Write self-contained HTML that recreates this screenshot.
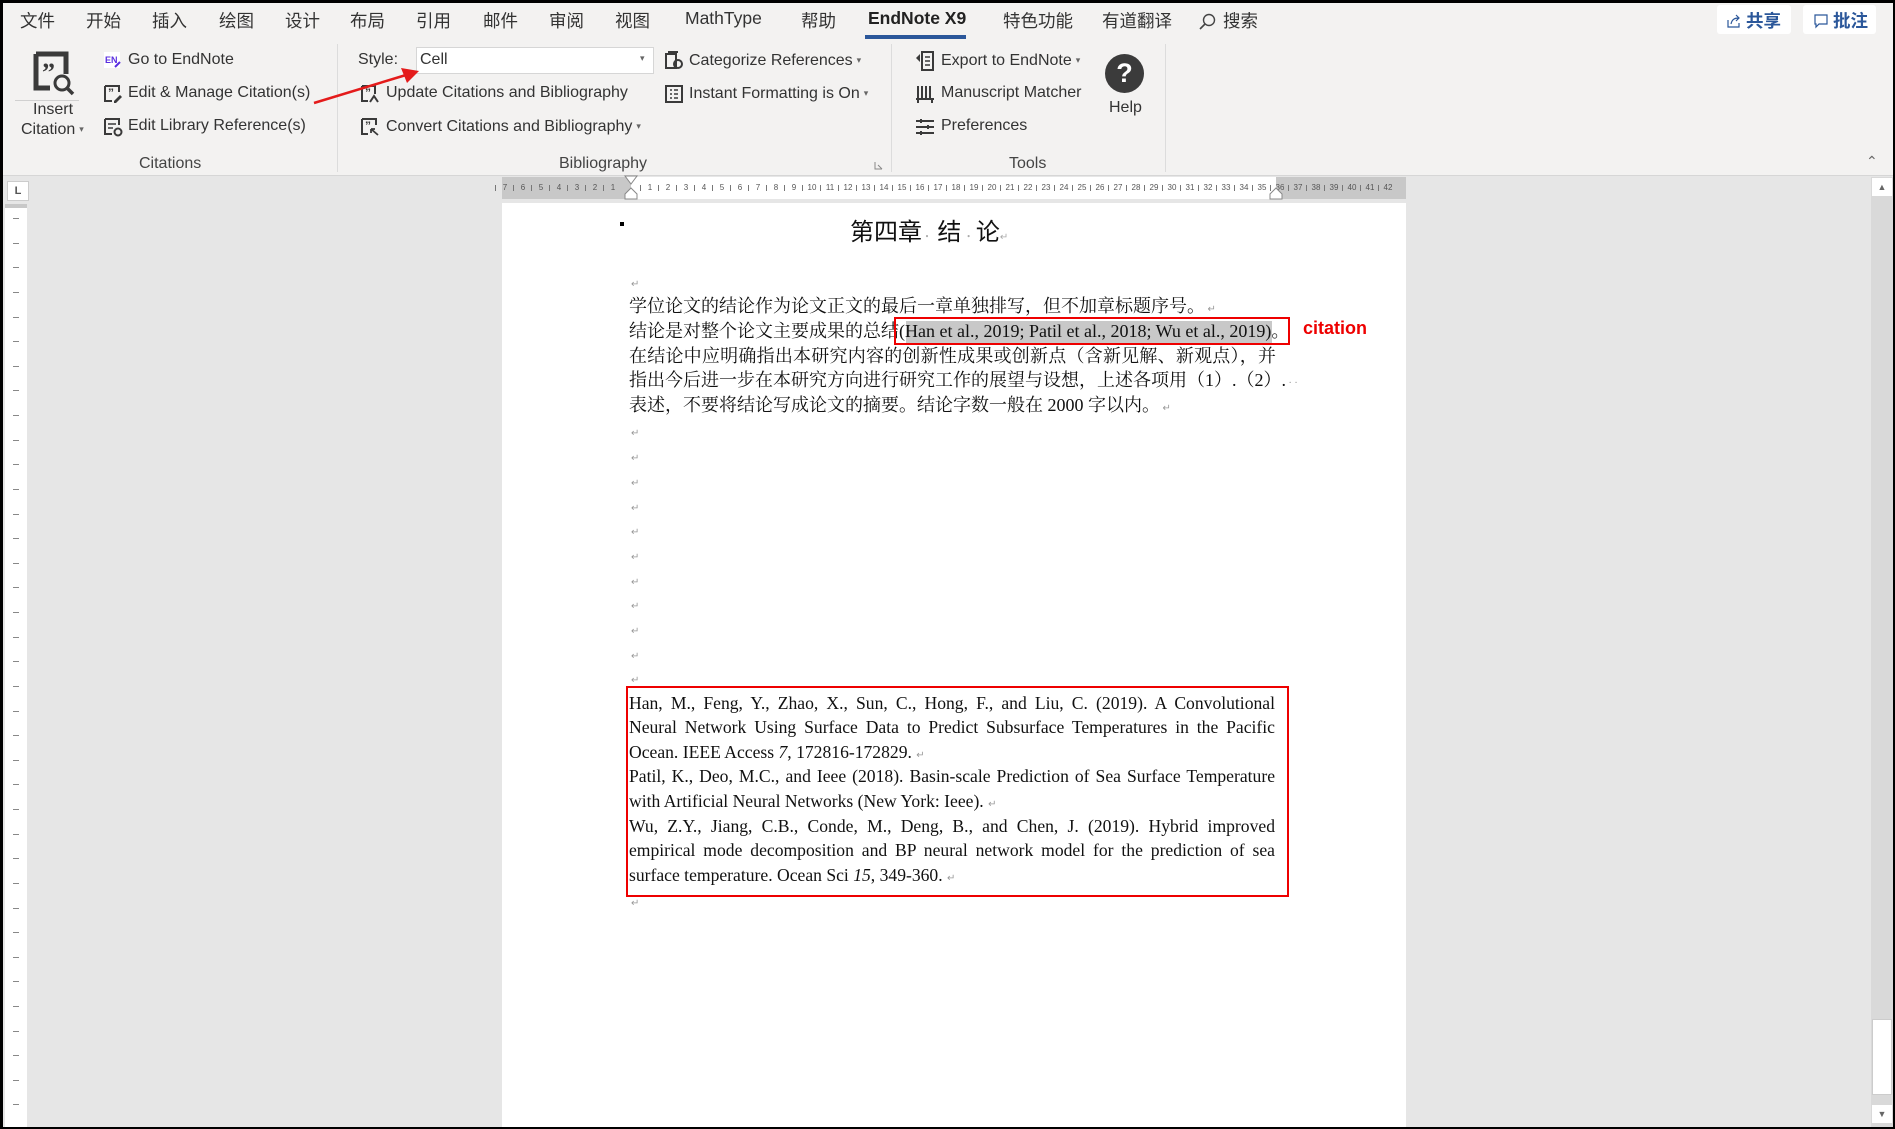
<!DOCTYPE html>
<html><head><meta charset="utf-8">
<style>
*{margin:0;padding:0;box-sizing:border-box}
body{width:1895px;height:1129px;overflow:hidden;background:#000;position:relative;font-family:"Liberation Sans","Noto Sans CJK SC",sans-serif}
#win{position:absolute;left:3px;top:3px;width:1890px;height:1124px;background:#e6e6e6;overflow:hidden}
.abs{position:absolute}
#menu{position:absolute;left:0;top:0;width:100%;height:37px;background:#f3f2f1}
.tab{position:absolute;top:5px;font-size:17.5px;color:#333;white-space:nowrap}
#ribbon{position:absolute;left:0;top:37px;width:100%;height:136px;background:#f3f2f1;border-bottom:1px solid #d6d6d6}
.rt{position:absolute;font-size:16px;color:#333;white-space:nowrap;line-height:20px}
.sep{position:absolute;top:4px;width:1px;height:128px;background:#dcdcdc}
.grp{position:absolute;top:115px;font-size:16px;color:#444}
.ic{position:absolute}
.dd{font-size:9px;color:#666;margin-left:4px;vertical-align:2px}
#ruler{position:absolute;left:499px;top:174px;width:904px;height:22px;background:#c8c8c8}
#rwhite{position:absolute;left:129px;top:0;width:645px;height:22px;background:#fff}
.rn{position:absolute;top:5px;width:18px;text-align:center;font-size:8px;color:#555;line-height:12px}
.rn:before{content:"";position:absolute;left:-1px;top:3px;width:1px;height:6px;background:#777}
#page{position:absolute;left:499px;top:200px;width:904px;height:930px;background:#fff}
.ln{position:absolute;font-family:"Liberation Serif","Noto Serif CJK SC",serif;font-size:18px;color:#111;white-space:nowrap;line-height:24px}
.rf{position:absolute;left:127px;width:646px;font-family:"Liberation Serif","Noto Serif CJK SC",serif;font-size:17.6px;color:#111;line-height:24px;white-space:nowrap;text-align:justify;text-align-last:justify}
.rf.l{text-align-last:left}
.pm{position:absolute;left:129px;font-size:10px;color:#999;font-family:"DejaVu Sans",sans-serif}
#vr{position:absolute;left:2px;top:201px;width:22px;height:923px;background:#fff}
.vt{position:absolute;left:8px;width:6px;height:1px;background:#888}
</style></head><body>
<div id="win">
<div id="menu">
<span class="tab" style="left:17px">文件</span>
<span class="tab" style="left:83px">开始</span>
<span class="tab" style="left:149px">插入</span>
<span class="tab" style="left:216px">绘图</span>
<span class="tab" style="left:282px">设计</span>
<span class="tab" style="left:347px">布局</span>
<span class="tab" style="left:413px">引用</span>
<span class="tab" style="left:480px">邮件</span>
<span class="tab" style="left:546px">审阅</span>
<span class="tab" style="left:612px">视图</span>
<span class="tab" style="left:682px">MathType</span>
<span class="tab" style="left:798px">帮助</span>
<span class="tab" style="left:865px;font-weight:bold;color:#222">EndNote X9</span>
<div class="abs" style="left:862px;top:32px;width:101px;height:4px;background:#2b579a"></div>
<span class="tab" style="left:1000px">特色功能</span>
<span class="tab" style="left:1099px">有道翻译</span>
<svg class="ic" style="left:1194px;top:9px" width="20" height="20" viewBox="0 0 20 20"><circle cx="12" cy="8" r="5.5" fill="none" stroke="#444" stroke-width="1.4"/><path d="M8 12 L3 17" stroke="#444" stroke-width="1.6"/></svg>
<span class="tab" style="left:1220px">搜索</span>
<div class="abs" style="left:1714px;top:2px;width:74px;height:29px;background:#fff;border-radius:3px"></div>
<svg class="ic" style="left:1723px;top:10px" width="16" height="16" viewBox="0 0 16 16"><path d="M2 7v7h11v-4" fill="none" stroke="#2b579a" stroke-width="1.2"/><path d="M5 11 C6 6 9 5 13 5 M10 2l3 3-3 3" fill="none" stroke="#2b579a" stroke-width="1.2"/></svg>
<span class="tab" style="left:1743px;top:5px;color:#2b579a;font-weight:bold">共享</span>
<div class="abs" style="left:1800px;top:2px;width:73px;height:29px;background:#fff;border-radius:3px"></div>
<svg class="ic" style="left:1810px;top:10px" width="16" height="16" viewBox="0 0 16 16"><path d="M2 2h12v9H6l-3 3v-3H2z" fill="none" stroke="#2b579a" stroke-width="1.2"/></svg>
<span class="tab" style="left:1830px;top:5px;color:#2b579a;font-weight:bold">批注</span>
</div>

<div id="ribbon">
<svg class="ic" style="left:28px;top:11px" width="46" height="46" viewBox="0 0 46 46"><path d="M5 3h30v20M5 3v34h14" fill="none" stroke="#3a3a3a" stroke-width="5"/><text x="11" y="30" font-family="Liberation Serif" font-weight="bold" font-size="26" fill="#3a3a3a">”</text><circle cx="31" cy="32" r="7" fill="none" stroke="#3a3a3a" stroke-width="3"/><path d="M36 37l6 6" stroke="#3a3a3a" stroke-width="3.5"/></svg>
<div class="abs" style="left:12px;top:60px;width:64px;height:1px;background:#d0d0d0"></div>
<span class="rt" style="left:30px;top:60px">Insert</span>
<span class="rt" style="left:18px;top:79px">Citation<span class="dd">▾</span></span>
<svg class="ic" style="left:100px;top:11px" width="18" height="18" viewBox="0 0 18 18"><rect x="1" y="1" width="16" height="16" fill="#fff"/><text x="2" y="12" font-size="9" font-weight="bold" fill="#5a2ee0" font-family="Liberation Sans">EN</text><path d="M12 16l5-5" stroke="#5a2ee0" stroke-width="2"/></svg>
<span class="rt" style="left:125px;top:10px">Go to EndNote</span>
<svg class="ic" style="left:100px;top:44px" width="20" height="20" viewBox="0 0 20 20"><path d="M2 2h14v6M2 2v15h7" fill="none" stroke="#3a3a3a" stroke-width="2"/><text x="5" y="13" font-size="12" font-weight="bold" fill="#3a3a3a">”</text><path d="M11 17l6-6 2 2-6 6h-2z" fill="#3a3a3a"/></svg>
<span class="rt" style="left:125px;top:43px">Edit &amp; Manage Citation(s)</span>
<svg class="ic" style="left:100px;top:77px" width="20" height="20" viewBox="0 0 20 20"><path d="M2 2h14v6M2 2v15h7" fill="none" stroke="#3a3a3a" stroke-width="2"/><path d="M5 7h8M5 11h5" stroke="#3a3a3a" stroke-width="1.6"/><circle cx="15" cy="15" r="3.5" fill="none" stroke="#3a3a3a" stroke-width="2"/></svg>
<span class="rt" style="left:125px;top:76px">Edit Library Reference(s)</span>
<span class="grp" style="left:136px">Citations</span>
<div class="sep" style="left:334px"></div>

<span class="rt" style="left:355px;top:10px">Style:</span>
<div class="abs" style="left:413px;top:7px;width:238px;height:27px;background:#fff;border:1px solid #d6d6d6"></div>
<span class="rt" style="left:417px;top:10px">Cell</span>
<span class="abs" style="left:637px;top:13px;font-size:9px;color:#666">▾</span>
<svg class="ic" style="left:357px;top:44px" width="20" height="20" viewBox="0 0 20 20"><path d="M2 2h13v8M2 2v15h6" fill="none" stroke="#3a3a3a" stroke-width="2"/><text x="5" y="13" font-size="12" font-weight="bold" fill="#3a3a3a">”</text><path d="M10 18l4-6 4 6" fill="none" stroke="#3a3a3a" stroke-width="2"/></svg>
<span class="rt" style="left:383px;top:43px">Update Citations and Bibliography</span>
<svg class="ic" style="left:357px;top:77px" width="20" height="20" viewBox="0 0 20 20"><path d="M2 2h14v6M2 2v15h6" fill="none" stroke="#3a3a3a" stroke-width="2"/><text x="5" y="13" font-size="12" font-weight="bold" fill="#3a3a3a">”</text><path d="M11 12l7 6M11 12v4M11 12h4" fill="none" stroke="#3a3a3a" stroke-width="1.8"/></svg>
<span class="rt" style="left:383px;top:76px">Convert Citations and Bibliography<span class="dd">▾</span></span>
<svg class="ic" style="left:661px;top:11px" width="20" height="20" viewBox="0 0 20 20"><rect x="2" y="3" width="10" height="14" fill="none" stroke="#3a3a3a" stroke-width="2"/><circle cx="14" cy="13" r="4" fill="none" stroke="#3a3a3a" stroke-width="2"/><path d="M4 1h10" stroke="#3a3a3a" stroke-width="2"/></svg>
<span class="rt" style="left:686px;top:10px">Categorize References<span class="dd">▾</span></span>
<svg class="ic" style="left:661px;top:44px" width="20" height="20" viewBox="0 0 20 20"><rect x="2" y="2" width="16" height="16" fill="none" stroke="#3a3a3a" stroke-width="2"/><path d="M6 6h2M6 10h2M6 14h2M10 6h4M10 10h4M10 14h4" stroke="#3a3a3a" stroke-width="1.6"/></svg>
<span class="rt" style="left:686px;top:43px">Instant Formatting is On<span class="dd">▾</span></span>
<span class="grp" style="left:556px">Bibliography</span>
<svg class="ic" style="left:871px;top:121px" width="9" height="9" viewBox="0 0 9 9"><path d="M1 1v7h7M4 4l4 4" stroke="#888" fill="none"/></svg>
<div class="sep" style="left:888px"></div>

<svg class="ic" style="left:912px;top:10px" width="20" height="22" viewBox="0 0 20 22"><rect x="7" y="2" width="11" height="18" fill="none" stroke="#3a3a3a" stroke-width="2"/><path d="M10 7h5M10 11h5M10 15h5" stroke="#3a3a3a" stroke-width="1.4"/><path d="M1 8l4-4v8z" fill="#3a3a3a"/></svg>
<span class="rt" style="left:938px;top:10px">Export to EndNote<span class="dd">▾</span></span>
<svg class="ic" style="left:912px;top:44px" width="20" height="20" viewBox="0 0 20 20"><path d="M3 2v12M7 2v12M11 2v12M15 2v12M1 15h18M3 15v4M17 15v4" stroke="#3a3a3a" stroke-width="2" fill="none"/></svg>
<span class="rt" style="left:938px;top:43px">Manuscript Matcher</span>
<svg class="ic" style="left:912px;top:77px" width="20" height="20" viewBox="0 0 20 20"><path d="M1 4h18M1 10h18M1 16h18" stroke="#3a3a3a" stroke-width="2"/><path d="M6 2v4M13 8v4M6 14v4" stroke="#3a3a3a" stroke-width="2"/></svg>
<span class="rt" style="left:938px;top:76px">Preferences</span>
<div class="abs" style="left:1102px;top:14px;width:39px;height:39px;border-radius:50%;background:#3b3b3b;color:#fff;font-weight:bold;font-size:27px;text-align:center;line-height:39px">?</div>
<span class="rt" style="left:1106px;top:58px">Help</span>
<span class="grp" style="left:1006px">Tools</span>
<div class="sep" style="left:1162px"></div>
<span class="abs" style="left:1863px;top:113px;font-size:14px;color:#666">⌃</span>
</div>

<svg class="abs" style="left:300px;top:60px" width="130" height="50" viewBox="0 0 130 50"><path d="M11 40 L103 12" stroke="#e41b1b" stroke-width="2.5"/><path d="M116 8 L98 5 L104 20 Z" fill="#e41b1b"/></svg>

<div class="abs" style="left:4px;top:178px;width:22px;height:20px;background:#fff;border:1px solid #ccc;font-size:11px;font-weight:bold;text-align:center;color:#555;line-height:18px">L</div>
<div id="vr">
<div class="abs" style="left:0;top:0;width:22px;height:4px;background:#c8c8c8"></div>
<div class="vt" style="top:14px"></div><div class="vt" style="top:39px"></div><div class="vt" style="top:63px"></div><div class="vt" style="top:88px"></div><div class="vt" style="top:113px"></div><div class="vt" style="top:137px"></div><div class="vt" style="top:162px"></div><div class="vt" style="top:186px"></div><div class="vt" style="top:211px"></div><div class="vt" style="top:236px"></div><div class="vt" style="top:260px"></div><div class="vt" style="top:285px"></div><div class="vt" style="top:310px"></div><div class="vt" style="top:334px"></div><div class="vt" style="top:359px"></div><div class="vt" style="top:383px"></div><div class="vt" style="top:408px"></div><div class="vt" style="top:433px"></div><div class="vt" style="top:457px"></div><div class="vt" style="top:482px"></div><div class="vt" style="top:507px"></div><div class="vt" style="top:531px"></div><div class="vt" style="top:556px"></div><div class="vt" style="top:580px"></div><div class="vt" style="top:605px"></div><div class="vt" style="top:630px"></div><div class="vt" style="top:654px"></div><div class="vt" style="top:679px"></div><div class="vt" style="top:704px"></div><div class="vt" style="top:728px"></div><div class="vt" style="top:753px"></div><div class="vt" style="top:777px"></div><div class="vt" style="top:802px"></div><div class="vt" style="top:827px"></div><div class="vt" style="top:851px"></div><div class="vt" style="top:876px"></div><div class="vt" style="top:900px"></div>
</div>

<div id="ruler"><div id="rwhite"></div>
<span class="rn" style="left:-6px">7</span><span class="rn" style="left:12px">6</span><span class="rn" style="left:30px">5</span><span class="rn" style="left:48px">4</span><span class="rn" style="left:66px">3</span><span class="rn" style="left:84px">2</span><span class="rn" style="left:102px">1</span>
<span class="rn" style="left:139px">1</span><span class="rn" style="left:157px">2</span><span class="rn" style="left:175px">3</span><span class="rn" style="left:193px">4</span><span class="rn" style="left:211px">5</span><span class="rn" style="left:229px">6</span><span class="rn" style="left:247px">7</span><span class="rn" style="left:265px">8</span><span class="rn" style="left:283px">9</span><span class="rn" style="left:301px">10</span><span class="rn" style="left:319px">11</span><span class="rn" style="left:337px">12</span><span class="rn" style="left:355px">13</span><span class="rn" style="left:373px">14</span><span class="rn" style="left:391px">15</span><span class="rn" style="left:409px">16</span><span class="rn" style="left:427px">17</span><span class="rn" style="left:445px">18</span><span class="rn" style="left:463px">19</span><span class="rn" style="left:481px">20</span><span class="rn" style="left:499px">21</span><span class="rn" style="left:517px">22</span><span class="rn" style="left:535px">23</span><span class="rn" style="left:553px">24</span><span class="rn" style="left:571px">25</span><span class="rn" style="left:589px">26</span><span class="rn" style="left:607px">27</span><span class="rn" style="left:625px">28</span><span class="rn" style="left:643px">29</span><span class="rn" style="left:661px">30</span><span class="rn" style="left:679px">31</span><span class="rn" style="left:697px">32</span><span class="rn" style="left:715px">33</span><span class="rn" style="left:733px">34</span><span class="rn" style="left:751px">35</span><span class="rn" style="left:769px">36</span><span class="rn" style="left:787px">37</span><span class="rn" style="left:805px">38</span><span class="rn" style="left:823px">39</span><span class="rn" style="left:841px">40</span><span class="rn" style="left:859px">41</span><span class="rn" style="left:877px">42</span>
<svg class="abs" style="left:122px;top:-2px" width="14" height="28" viewBox="0 0 14 28"><path d="M1 1h12L7 9z M7 13l6 6v5H1v-5z" fill="#fff" stroke="#888"/></svg>
<svg class="abs" style="left:767px;top:10px" width="14" height="14" viewBox="0 0 14 14"><path d="M7 1l6 6v5H1V7z" fill="#fff" stroke="#888"/></svg>
</div>

<div id="page">
<div class="abs" style="left:118px;top:19px;width:4px;height:4px;background:#000"></div>
<div class="ln" style="left:348px;top:12px;font-size:24px;line-height:30px;font-family:'Noto Sans CJK SC',sans-serif">第四章<span style="color:#aaa;font-size:10px">·</span> 结<span style="color:#aaa;font-size:10px"> · </span>论<span style="color:#aaa;font-size:10px">↵</span></div>
<span class="pm" style="top:76px">↵</span>
<div class="ln" style="left:127px;top:91px">学位论文的结论作为论文正文的最后一章单独排写，但不加章标题序号。<span style="font-size:10px;color:#999"> ↵</span></div>
<div class="abs" style="left:404px;top:118px;width:366px;height:22px;background:#c8c8c8"></div>
<div class="ln" style="left:127px;top:116px">结论是对整个论文主要成果的总结(Han et al., 2019; Patil et al., 2018; Wu et al., 2019)。</div>
<div class="abs" style="left:392px;top:114px;width:396px;height:28px;border:2.5px solid #e00"></div>
<div class="abs" style="left:801px;top:115px;color:#e00;font-weight:bold;font-size:18px;font-family:'Liberation Sans',sans-serif">citation</div>
<div class="ln" style="left:127px;top:141px;width:647px;text-align:justify;text-align-last:justify">在结论中应明确指出本研究内容的创新性成果或创新点（含新见解、新观点），并</div>
<div class="ln" style="left:127px;top:165px">指出今后进一步在本研究方向进行研究工作的展望与设想，上述各项用（1）.（2）.<span style="font-size:10px;color:#999"> · ·</span></div>
<div class="ln" style="left:127px;top:190px">表述，不要将结论写成论文的摘要。结论字数一般在 2000 字以内。<span style="font-size:10px;color:#999"> ↵</span></div>
<span class="pm" style="top:225px">↵</span><span class="pm" style="top:250px">↵</span><span class="pm" style="top:275px">↵</span><span class="pm" style="top:300px">↵</span><span class="pm" style="top:324px">↵</span><span class="pm" style="top:349px">↵</span><span class="pm" style="top:374px">↵</span><span class="pm" style="top:398px">↵</span><span class="pm" style="top:423px">↵</span><span class="pm" style="top:448px">↵</span><span class="pm" style="top:472px">↵</span>
<div class="abs" style="left:124px;top:483px;width:663px;height:211px;border:2.5px solid #e00"></div>
<div class="rf" style="top:488px">Han, M., Feng, Y., Zhao, X., Sun, C., Hong, F., and Liu, C. (2019). A Convolutional</div>
<div class="rf" style="top:512px">Neural Network Using Surface Data to Predict Subsurface Temperatures in the Pacific</div>
<div class="rf l" style="top:537px">Ocean. IEEE Access <i>7</i>, 172816-172829. <span style="font-size:10px;color:#999">↵</span></div>
<div class="rf" style="top:561px">Patil, K., Deo, M.C., and Ieee (2018). Basin-scale Prediction of Sea Surface Temperature</div>
<div class="rf l" style="top:586px">with Artificial Neural Networks (New York: Ieee). <span style="font-size:10px;color:#999">↵</span></div>
<div class="rf" style="top:611px">Wu, Z.Y., Jiang, C.B., Conde, M., Deng, B., and Chen, J. (2019). Hybrid improved</div>
<div class="rf" style="top:635px">empirical mode decomposition and BP neural network model for the prediction of sea</div>
<div class="rf l" style="top:660px">surface temperature. Ocean Sci <i>15</i>, 349-360. <span style="font-size:10px;color:#999">↵</span></div>
<span class="pm" style="top:695px">↵</span>
</div>

<div class="abs" style="left:1868px;top:174px;width:22px;height:950px;background:#d9d9d9"></div>
<div class="abs" style="left:1869px;top:175px;width:20px;height:18px;background:#fff;font-size:9px;color:#666;text-align:center;line-height:18px">▲</div>
<div class="abs" style="left:1869px;top:1016px;width:20px;height:76px;background:#fff;border:1px solid #ccc"></div>
<div class="abs" style="left:1869px;top:1102px;width:20px;height:18px;background:#fff;font-size:9px;color:#666;text-align:center;line-height:18px">▼</div>
</div>
</body></html>
